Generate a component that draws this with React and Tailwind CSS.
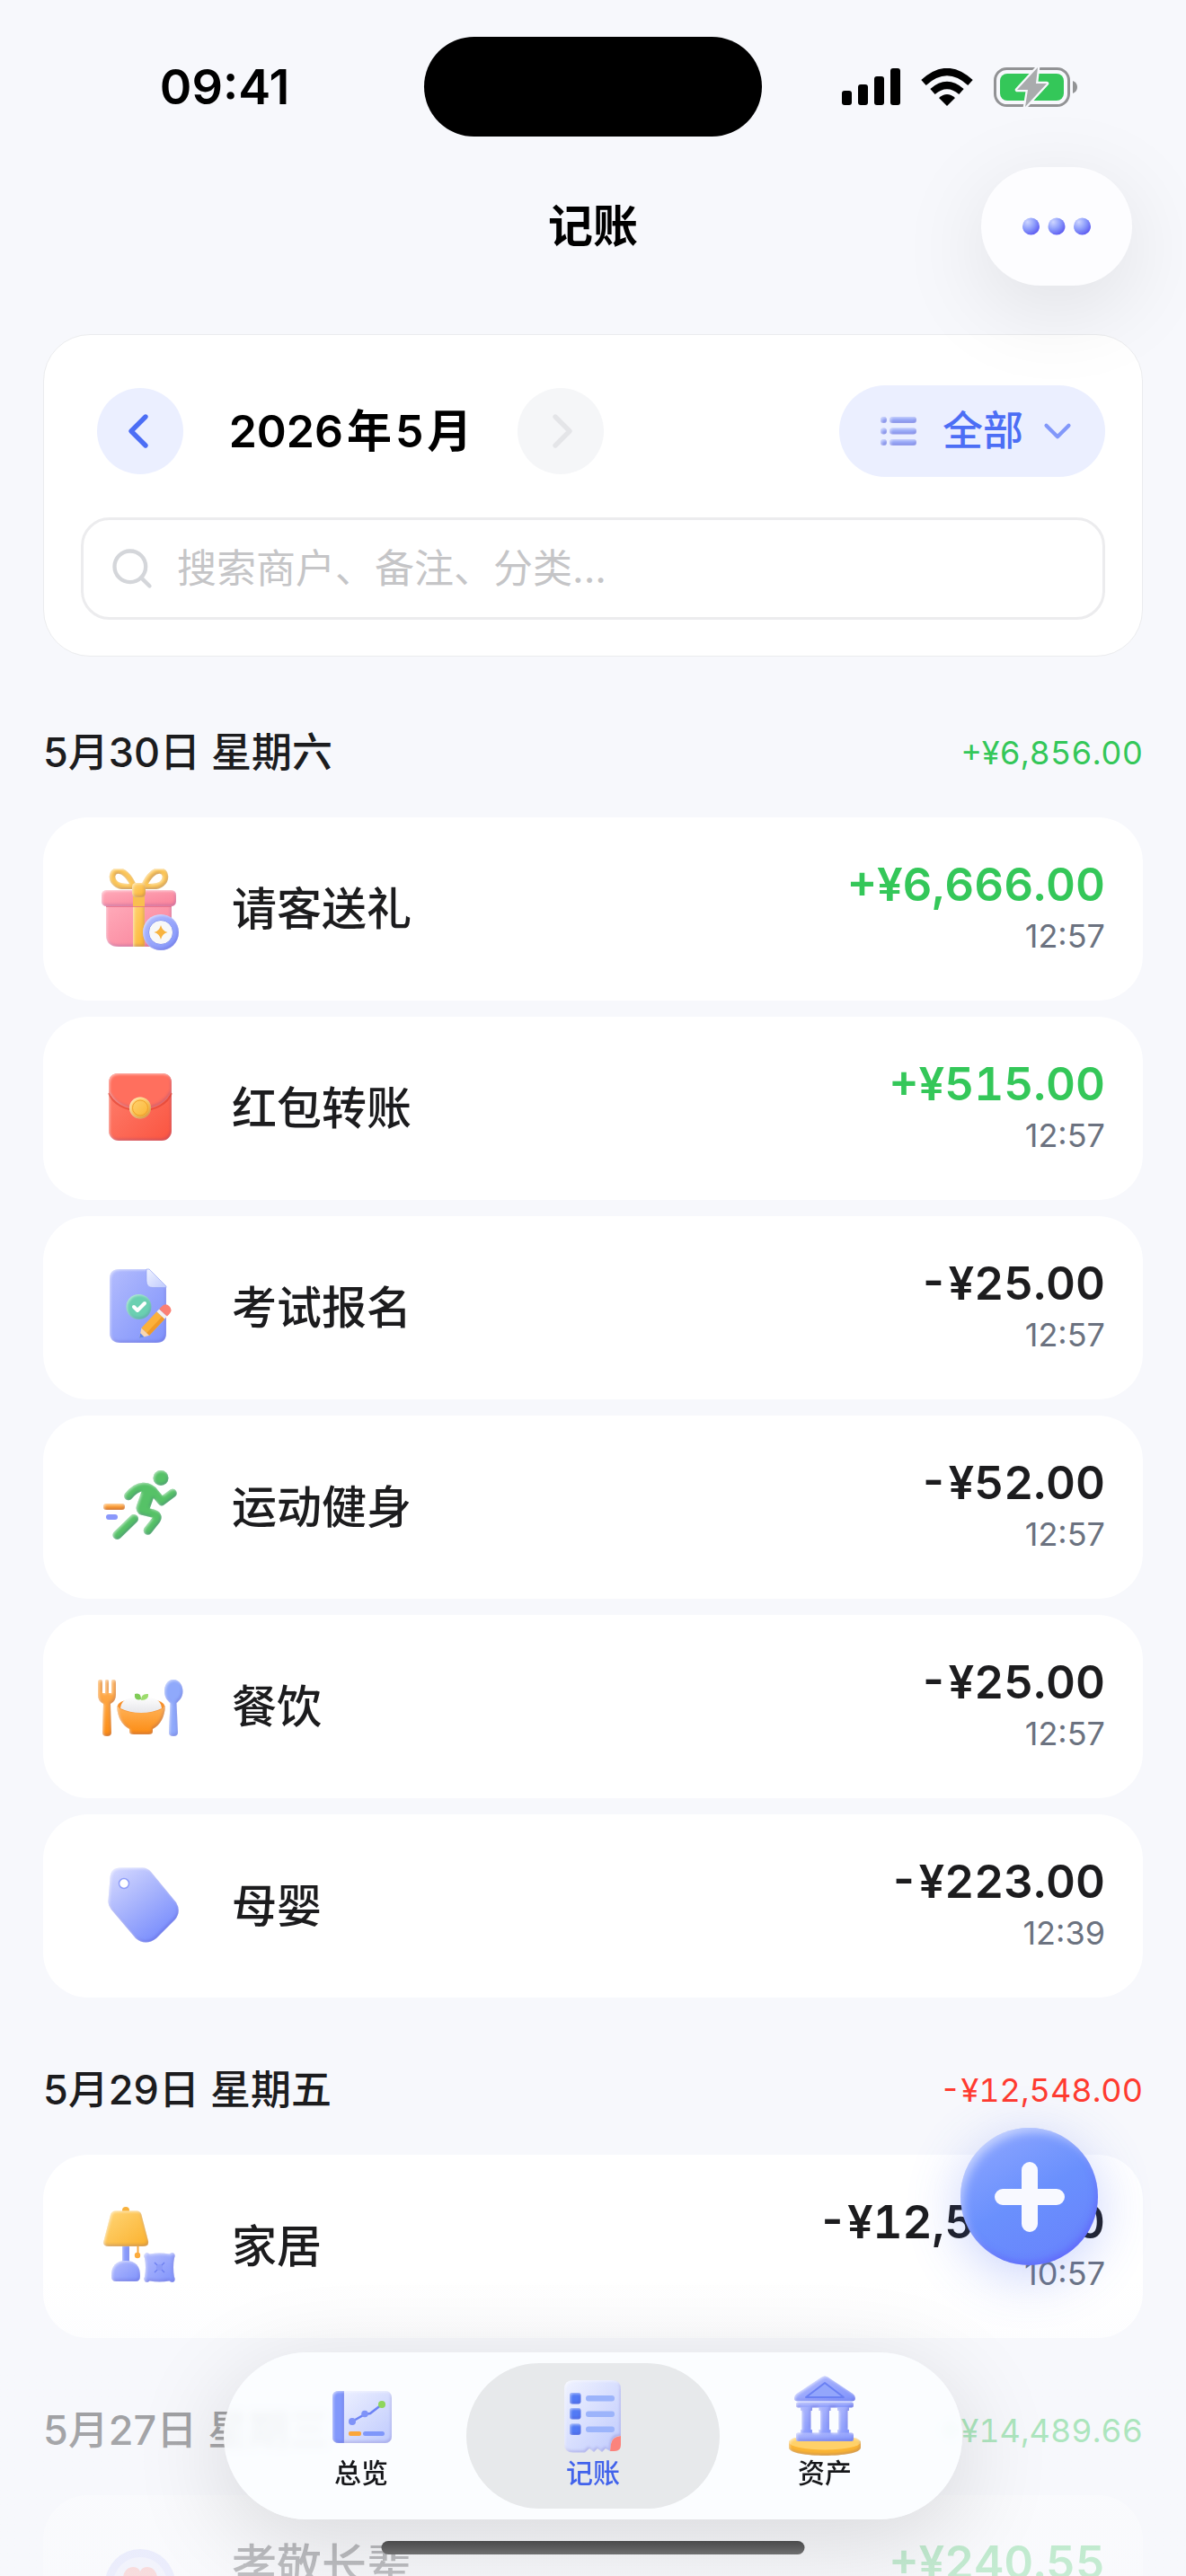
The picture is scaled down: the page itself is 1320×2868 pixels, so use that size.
import React from "react";
import { ChevronDown, ChevronLeft, ChevronRight, Search } from "lucide-react";

const days = [
  {
    date: "5月30日 星期六",
    total: "+¥6,856.00",
    records: [
      { name: "请客送礼", amount: "+¥6,666.00", time: "12:57", Icon: GiftIcon },
      { name: "红包转账", amount: "+¥515.00", time: "12:57", Icon: RedPacketIcon },
      { name: "考试报名", amount: "-¥25.00", time: "12:57", Icon: ExamIcon },
      { name: "运动健身", amount: "-¥52.00", time: "12:57", Icon: RunnerIcon },
      { name: "餐饮", amount: "-¥25.00", time: "12:57", Icon: MealIcon },
      { name: "母婴", amount: "-¥223.00", time: "12:39", Icon: TagIcon },
    ],
  },
  {
    date: "5月29日 星期五",
    total: "-¥12,548.00",
    records: [
      { name: "家居", amount: "-¥12,548.00", time: "10:57", Icon: LampIcon },
    ],
  },
  {
    date: "5月27日 星期三",
    total: "+¥14,489.66",
    records: [
      { name: "孝敬长辈", note: "", amount: "+¥240.55", time: "", Icon: HeartIcon },
    ],
  },
];

// shared gradients and the soft bevel used by all category icons
function IconDefs() {
  return (
    <svg className="absolute h-0 w-0" aria-hidden="true">
      <defs>
        <linearGradient id="pink" x1="0" y1="0" x2="1" y2="1">
          <stop offset="0" stopColor="#ffabba" />
          <stop offset="1" stopColor="#f98199" />
        </linearGradient>
        <linearGradient id="gold" x1="0" y1="0" x2="1" y2="1">
          <stop offset="0" stopColor="#ffd678" />
          <stop offset="1" stopColor="#fbb12d" />
        </linearGradient>
        <linearGradient id="red" x1="0" y1="0" x2="1" y2="1">
          <stop offset="0" stopColor="#ff8270" />
          <stop offset="1" stopColor="#fa5440" />
        </linearGradient>
        <linearGradient id="blue" x1="0" y1="0" x2="1" y2="1">
          <stop offset="0" stopColor="#b3bcfd" />
          <stop offset="1" stopColor="#7f92fb" />
        </linearGradient>
        <linearGradient id="tag" x1="0.1" y1="0" x2="0.8" y2="1">
          <stop offset="0" stopColor="#d3d7ff" />
          <stop offset="0.5" stopColor="#a3b0fc" />
          <stop offset="1" stopColor="#7388fd" />
        </linearGradient>
        <linearGradient id="pale" x1="0" y1="0" x2="1" y2="1">
          <stop offset="0" stopColor="#f0f3ff" />
          <stop offset="1" stopColor="#bfcafd" />
        </linearGradient>
        <linearGradient id="orange" x1="0" y1="0" x2="0" y2="1">
          <stop offset="0" stopColor="#ffb35a" />
          <stop offset="1" stopColor="#fc8b12" />
        </linearGradient>
        <linearGradient id="rice" x1="0" y1="0" x2="0" y2="1">
          <stop offset="0" stopColor="#ffffff" />
          <stop offset="1" stopColor="#e6e6ea" />
        </linearGradient>
        <radialGradient id="dot" cx="0.3" cy="0.25" r="0.85">
          <stop offset="0" stopColor="#ced6ff" />
          <stop offset="0.5" stopColor="#8c9cfb" />
          <stop offset="1" stopColor="#5753f0" />
        </radialGradient>
        <filter id="puff" x="-10%" y="-10%" width="120%" height="120%" colorInterpolationFilters="sRGB">
          <feGaussianBlur in="SourceAlpha" stdDeviation="1.4" result="soft" />
          <feOffset in="soft" dx="1.2" dy="1.4" result="down" />
          <feComposite in="SourceAlpha" in2="down" operator="out" result="topEdge" />
          <feFlood floodColor="#fff" floodOpacity="0.6" />
          <feComposite in2="topEdge" operator="in" result="light" />
          <feOffset in="soft" dx="-1" dy="-1.6" result="up" />
          <feComposite in="SourceAlpha" in2="up" operator="out" result="lowEdge" />
          <feFlood floodColor="#30209a" floodOpacity="0.2" />
          <feComposite in2="lowEdge" operator="in" result="dark" />
          <feMerge>
            <feMergeNode in="SourceGraphic" />
            <feMergeNode in="dark" />
            <feMergeNode in="light" />
          </feMerge>
        </filter>
      </defs>
    </svg>
  );
}

function CategoryIcon({ children }) {
  return (
    <svg viewBox="0 0 96 96" className="h-24 w-24 shrink-0" aria-hidden="true">
      {children}
    </svg>
  );
}

function GiftIcon() {
  return (
    <CategoryIcon>
      <g fill="none" stroke="#fcc656" strokeWidth="6.5" strokeLinejoin="round" filter="url(#puff)">
        <path d="M41 23 C36 11 29 5 23 5.5 C16 6 15 15 21 20 C26 24 34 23.5 41 23 Z" />
        <path d="M52 23 C57 11 64 5 70 5.5 C77 6 78 15 72 20 C67 24 59 23.5 52 23 Z" />
      </g>
      <path d="M10 43 H83 V78 Q83 90 71 90 H24 Q10 90 10 76 Z" fill="url(#pink)" filter="url(#puff)" />
      <rect x="40" y="43" width="13" height="47" fill="url(#gold)" filter="url(#puff)" />
      <rect x="5" y="27" width="83" height="18" rx="5.5" fill="url(#pink)" filter="url(#puff)" />
      <path d="M10 45.5 H83" stroke="#e8607c" strokeWidth="1" opacity="0.7" />
      <rect x="40" y="27" width="13" height="18" fill="#f9bf50" />
      <rect x="39" y="19" width="15" height="16" rx="4.5" fill="url(#gold)" filter="url(#puff)" />
      <circle cx="71" cy="74" r="20" fill="url(#blue)" filter="url(#puff)" />
      <circle cx="71" cy="74" r="13.5" fill="#f8f8f8" stroke="#8797f2" strokeWidth="1" />
      <path d="M71 66 Q72.5 72.5 78.5 74 Q72.5 75.5 71 82 Q69.5 75.5 63.5 74 Q69.5 72.5 71 66 Z" fill="#f8b33e" />
    </CategoryIcon>
  );
}

function RedPacketIcon() {
  return (
    <CategoryIcon>
      <rect x="13" y="9" width="70" height="75" rx="11" fill="url(#red)" filter="url(#puff)" />
      <path d="M13 31 C18 43 31 50.5 48 50.5 C65 50.5 78 43 83 31" fill="none" stroke="#d93a2c" strokeWidth="2" opacity="0.55" />
      <path d="M13 29 C18 41 31 49 48 49 C65 49 78 41 83 29 V20 Q83 9 72 9 H24 Q13 9 13 20 Z" fill="#ff6f5e" filter="url(#puff)" />
      <circle cx="48" cy="47.5" r="12" fill="url(#gold)" filter="url(#puff)" />
      <circle cx="48" cy="47.5" r="8.5" fill="none" stroke="#f0a02a" strokeWidth="1" />
    </CategoryIcon>
  );
}

function ExamIcon() {
  return (
    <CategoryIcon>
      <path d="M25 5 H55 L77 25 V76 Q77 87 66 87 H26 Q14 87 14 75 V16 Q14 5 25 5 Z" fill="url(#blue)" filter="url(#puff)" />
      <path d="M55 5 H58 L77 24 V25.5 H62 Q55 25.5 55 18 Z" fill="url(#pale)" stroke="#8c9af2" strokeWidth="0.6" />
      <circle cx="46.5" cy="47" r="14" fill="#6bd0b1" filter="url(#puff)" />
      <path d="M41 47 L45 51 L53 43" fill="none" stroke="#fff" strokeWidth="4" strokeLinecap="round" strokeLinejoin="round" />
      <g transform="translate(47 82) rotate(-47)">
        <path d="M0 0 L10 -6 V6 Z" fill="#f8d6b2" />
        <path d="M0 0 L5 -3 V3 Z" fill="#5f86e8" />
        <rect x="10" y="-6" width="25" height="12" fill="#fcb13c" />
        <rect x="10" y="2" width="25" height="4" fill="#f09a28" />
        <rect x="35" y="-6" width="4" height="12" fill="#f4efee" />
        <path d="M39 -6 H42 Q49 -6 49 0 Q49 6 42 6 H39 Z" fill="#fb8073" />
      </g>
    </CategoryIcon>
  );
}

function RunnerIcon() {
  return (
    <CategoryIcon>
      <rect x="7" y="44" width="24" height="7" rx="3.5" fill="url(#orange)" filter="url(#puff)" />
      <rect x="10" y="56" width="13" height="6" rx="3" fill="#8a98fb" />
      <g fill="none" stroke="#56c267" strokeLinecap="round" strokeLinejoin="round" filter="url(#puff)">
        <circle cx="71" cy="15.5" r="8.5" fill="#56c267" stroke="none" />
        <path d="M22.5 79 L41 61" strokeWidth="10" />
        <path d="M35 35.5 Q43 26 51 25.5 Q59 25 64 32 L72 41.5 L84 32.5" strokeWidth="9.5" />
        <path d="M57 32 L51 49" strokeWidth="15" />
        <path d="M50 52 L62 55 Q69 57 66 62 L56.5 74" strokeWidth="9.5" />
      </g>
    </CategoryIcon>
  );
}

function MealIcon() {
  return (
    <CategoryIcon>
      <path
        d="M1 21 Q1 18 4 18 Q6 18 6 21 V33 H9 V20 Q9 18 11 18 Q13 18 13 20 V33 H16 V21 Q16 18 18 18 Q21 18 21 21 V35 Q21 42 15 45 L16 77 Q16 81 11 81 Q6 81 6 77 L7 45 Q1 42 1 35 Z"
        fill="url(#orange)"
        filter="url(#puff)"
      />
      <path
        d="M22 47 H76 Q75 66 62 73 V76 Q62 79 57 79 H41 Q36 79 36 76 V73 Q23 66 22 47 Z"
        fill="url(#orange)"
        filter="url(#puff)"
      />
      <ellipse cx="49" cy="47" rx="26" ry="8" fill="#f7902a" />
      <path d="M26 50 Q27 39 40 38 Q49 35 58 38 Q71 39 72 50 Q62 55 49 55 Q36 55 26 50 Z" fill="url(#rice)" />
      <path d="M49 40 Q41 42 42 34 Q49 32 49 40 Z" fill="#7fcb56" />
      <path d="M49 41 Q49 33 57 34 Q58 41 49 41 Z" fill="#9ddc6d" />
      <path
        d="M85 18 C92 18 95.5 25 95.5 31 C95.5 38 91 42 88.5 44 L90 77 Q90 81 85 81 Q80 81 80 77 L81.5 44 C79 42 75 38 75 31 C75 25 78 18 85 18 Z"
        fill="#8fa9fb"
        filter="url(#puff)"
      />
    </CategoryIcon>
  );
}

function TagIcon() {
  return (
    <CategoryIcon>
      <path d="M14.5 17 Q15 5.5 26 5.5 H51 Q56 5.5 60 10 L88 44 Q94 54 87 63 L66 84 Q54 93 43 84 L15.5 51.5 Q12 47 12.5 42 Z" fill="url(#tag)" filter="url(#puff)" />
      <circle cx="30" cy="23" r="5.5" fill="#fff" stroke="#8f9df8" strokeWidth="1.5" />
    </CategoryIcon>
  );
}

function LampIcon() {
  return (
    <CategoryIcon>
      <circle cx="32" cy="8" r="4" fill="#f8b13c" />
      <path d="M45.5 46 V56" stroke="#f8a93c" strokeWidth="2" />
      <circle cx="45" cy="58" r="3.2" fill="#fbab3d" />
      <rect x="28" y="46" width="8" height="22" fill="#8a9cfb" filter="url(#puff)" />
      <path d="M16 81 Q16 64 32 64 Q48 64 48 81 Q48 87 43 87 H21 Q16 87 16 81 Z" fill="url(#blue)" filter="url(#puff)" />
      <path d="M21 8.5 H44 Q48.5 8.5 49.5 13 L57 42 Q58 48 51 48 H13 Q6 48 7.5 42 L15 13 Q16 8.5 21 8.5 Z" fill="url(#gold)" filter="url(#puff)" />
      <path d="M55 55 Q57 55 58.5 56.5 Q69.5 54.5 80.5 56.5 Q82 55 84.5 55 Q88 57 86 61 Q84 71 86 82 Q88 86 84.5 88 Q82 88 80.5 86.5 Q69.5 88.5 58.5 86.5 Q57 88 55 88 Q51 86 53 82 Q55 71 53 61 Q51 57 55 55 Z" fill="url(#blue)" filter="url(#puff)" />
      <path d="M64 66 L75 77 M75 66 L64 77" stroke="#6d7ff0" strokeWidth="1.3" />
      <circle cx="69.5" cy="71.5" r="3.6" fill="#8d9cf8" />
    </CategoryIcon>
  );
}

function HeartIcon() {
  return (
    <CategoryIcon>
      <circle cx="48" cy="45" r="39" fill="#c9cdfb" />
      <circle cx="48" cy="45" r="30" fill="#e4e5fb" />
      <path d="M48 65 C20 47 28 26 40 26 Q46 26 48 31 Q50 26 56 26 C68 26 76 47 48 65 Z" fill="#f98a84" />
    </CategoryIcon>
  );
}

function TabIcon({ children }) {
  return (
    <svg viewBox="0 0 96 90" className="h-[90px] w-24" aria-hidden="true">
      {children}
    </svg>
  );
}

function BookIcon() {
  return (
    <TabIcon>
      <rect x="16" y="17" width="66" height="58" rx="7" fill="url(#pale)" filter="url(#puff)" />
      <path d="M29 17 V75 H23 Q16 75 16 68 V24 Q16 17 23 17 Z" fill="#8298fb" filter="url(#puff)" />
      <path d="M38 51 L52 43 L58 42 L71 32" fill="none" stroke="#6d83f5" strokeWidth="2.5" />
      <circle cx="38" cy="51" r="4" fill="#7f93f8" />
      <circle cx="52" cy="42.5" r="3.8" fill="#7f93f8" />
      <circle cx="71" cy="32" r="4" fill="#8ed65c" />
      <rect x="34" y="62" width="14" height="5" rx="2" fill="#fba63a" />
      <rect x="50" y="62" width="24" height="5" rx="2.5" fill="#7f97fa" />
    </TabIcon>
  );
}

function ReceiptIcon() {
  return (
    <TabIcon>
      <path d="M26 5 H69 Q79 5 79 15 V67 Q69 67 68 77 L67 84 L62 81 L58 85 L53 81 L49 85 L44 81 L39 85.5 H26 Q16 85.5 16 76 V15 Q16 5 26 5 Z" fill="url(#pale)" filter="url(#puff)" />
      <path d="M67 84 L68 76 Q69 68 79 67 V77 Q79 84 72 84 Z" fill="#fb837c" />
      <g fill="#527af5" filter="url(#puff)">
        <rect x="22" y="19" width="12.5" height="12.5" rx="3" />
        <rect x="22" y="36" width="12.5" height="12.5" rx="3" />
        <rect x="22" y="53.5" width="12.5" height="12.5" rx="3" />
      </g>
      <g fill="#9cb4fb">
        <rect x="40" y="22" width="32" height="6.5" rx="3" />
        <rect x="40" y="39.5" width="32" height="6.5" rx="3" />
        <rect x="40" y="56.5" width="32" height="6.5" rx="3" />
      </g>
    </TabIcon>
  );
}

function BankIcon() {
  return (
    <TabIcon>
      <g filter="url(#puff)">
        <path d="M8 73 V80 C8 92 88 92 88 80 V73 Z" fill="#fbb534" />
        <ellipse cx="48" cy="74" rx="40" ry="8.5" fill="#ffd169" />
      </g>
      <g fill="url(#blue)" filter="url(#puff)">
        <path d="M44 2 Q48 -1 52 2 L79 20 Q82 22 82 25 Q82 28.5 78 28.5 H18 Q14 28.5 14 25 Q14 22 17 20 Z" />
        <rect x="16" y="29.5" width="64" height="6" rx="2.5" />
        <path d="M21 35 H34 V39 H32.5 V60 H34 V64 H21 V60 H22.5 V39 H21 Z" />
        <path d="M41.5 35 H54.5 V39 H53 V60 H54.5 V64 H41.5 V60 H43 V39 H41.5 Z" />
        <path d="M62 35 H75 V39 H73.5 V60 H75 V64 H62 V60 H63.5 V39 H62 Z" />
        <rect x="16" y="63.5" width="64" height="9.5" rx="2.5" />
      </g>
      <path d="M48 8 L69 24 H27 Z" fill="#93a6fb" stroke="#6a80f3" strokeWidth="2" strokeLinejoin="round" />
    </TabIcon>
  );
}

function StatusBar() {
  return (
    <div className="grid grid-cols-[1fr_376px_1fr] items-center pt-[41px]">
      <time className="pl-7 text-center text-[54px] leading-none font-semibold">09:41</time>
      <div className="h-[111px] rounded-full bg-black" />
      <div className="flex items-center justify-center gap-[23px] pr-8">
        <svg viewBox="0 0 65 42" className="h-[42px] w-[65px]" aria-hidden="true">
          <rect x="0" y="25" width="11" height="16" rx="3" />
          <rect x="18" y="18" width="11" height="23" rx="3" />
          <rect x="36" y="9" width="11" height="32" rx="3" />
          <rect x="54" y="0" width="11" height="41" rx="3" />
        </svg>
        <svg viewBox="0 0 58 42" className="h-[42px] w-[58px]" aria-hidden="true">
          <path d="M29 42 L20 33 Q29 25 38 33 Z" strokeLinejoin="round" />
          <path d="M13 26 Q29 12 45 26" fill="none" stroke="#000" strokeWidth="8" />
          <path d="M3 16 Q29 -8 55 16" fill="none" stroke="#000" strokeWidth="8" />
        </svg>
        <svg viewBox="0 0 93 44" className="h-11 w-[93px]" aria-hidden="true">
          <rect x="1.5" y="1.5" width="82" height="41" rx="13" fill="none" stroke="#929395" strokeWidth="3" />
          <rect x="7" y="7" width="71" height="30" rx="8" fill="#34c759" />
          <path d="M88 15 Q93 17 93 22 Q93 27 88 29 Z" fill="#929395" />
          <path d="M49 0 L26 25 H38 L35 44 L59 18 H47 Z" fill="#a9abad" stroke="#f7f8fc" strokeWidth="4.5" strokeLinejoin="round" paintOrder="stroke" />
        </svg>
      </div>
    </div>
  );
}

function FilterCard() {
  return (
    <section className="mb-1 rounded-[52px] border border-[#ebecee] bg-white px-[41px] pt-14 pb-10">
      <div className="flex items-center justify-between">
        <div className="flex items-center pl-[18px]">
          <button aria-label="上个月" className="flex h-24 w-24 items-center justify-center rounded-full bg-[#ebefff] pr-1 text-[#4c6ef5]">
            <ChevronLeft strokeWidth={2} className="h-16 w-16" />
          </button>
          <h2 className="w-[372px] text-center text-[50px] leading-none font-semibold text-black">
            2026<span className="mx-1">年</span>5<span className="ml-1">月</span>
          </h2>
          <button aria-label="下个月" disabled className="flex h-24 w-24 items-center justify-center rounded-full bg-[#f5f6f8] pl-1 text-[#e4e5e8]">
            <ChevronRight strokeWidth={2} className="h-16 w-16" />
          </button>
        </div>
        <label className="flex h-[102px] items-center rounded-full bg-[#ebefff] pr-7 pl-[46px] text-[#4c6ef5]">
          <svg viewBox="0 0 40 32" className="mr-[29px] h-8 w-10" aria-hidden="true">
            <g fill="#9aabf9" filter="url(#puff)">
              <circle cx="3.5" cy="3.5" r="3.5" />
              <circle cx="3.5" cy="16" r="3.5" />
              <circle cx="3.5" cy="28.5" r="3.5" />
              <rect x="10" y="0" width="30" height="7" rx="3.5" />
              <rect x="10" y="12.5" width="30" height="7" rx="3.5" />
              <rect x="10" y="25" width="30" height="7" rx="3.5" />
            </g>
          </svg>
          <select aria-label="账单类型" className="appearance-none bg-transparent text-[45px] leading-[60px] font-medium">
            <option>全部</option>
            <option>支出</option>
            <option>收入</option>
          </select>
          <ChevronDown strokeWidth={2} className="ml-3 h-[50px] w-[50px] text-[#8298fa]" />
        </label>
      </div>
      <label className="mt-[45px] flex h-[114px] items-center gap-6 rounded-[32px] border-[3px] border-[#ececee] pr-8 pl-7">
        <Search strokeWidth={2} className="h-[52px] w-[52px] shrink-0 text-[#d4d6da]" />
        <input
          type="search"
          aria-label="搜索"
          placeholder="搜索商户、备注、分类..."
          className="min-w-0 flex-1 bg-transparent text-[44px] leading-[60px] outline-none placeholder:text-[#c5c5c7]"
        />
      </label>
    </section>
  );
}

function RecordRow({ name, note, amount, time, Icon }) {
  return (
    <li className="flex h-[204px] items-center rounded-[50px] bg-white pr-[42px] pl-[60px]">
      <Icon />
      <span className="ml-[54px] flex flex-1 flex-col">
        <span className="text-[50px] leading-[60px] font-medium">{name}</span>
        {note !== undefined && <span className="h-12 text-[36px] leading-[48px] text-[#6b7280]">{note}</span>}
      </span>
      <span className="flex flex-col items-end">
        <span
          className={`text-[51px] leading-[60px] font-semibold tabular-nums ${
            amount.startsWith("+") ? "text-[#34c759]" : ""
          }`}
        >
          {amount}
        </span>
        <time className="h-[54px] text-[36px] leading-[54px] text-[#6b7280]">{time}</time>
      </span>
    </li>
  );
}

function TabItem({ label, active, children }) {
  return (
    <a
      href="#"
      aria-current={active ? "page" : undefined}
      className={`-mx-3 flex h-[162px] w-[282px] flex-col items-center rounded-full pt-[14px] ${
        active ? "bg-[#e7e9eb] text-[#4263eb]" : "text-[#16171a]"
      }`}
    >
      {children}
      <span className="text-[30px] leading-9 font-medium">{label}</span>
    </a>
  );
}

export default function App() {
  return (
    <div className="relative flex h-screen flex-col overflow-hidden bg-[#f7f8fc] font-['Inter','Noto_Sans_CJK_SC',sans-serif] text-[#1c1c1e]">
      <IconDefs />
      <header className="relative z-10 text-black">
        <StatusBar />
        <div className="grid grid-cols-[1fr_auto_1fr] items-center px-[60px] pt-[34px]">
          <h1 className="col-start-2 text-[50px] leading-none font-semibold">记账</h1>
          <button
            aria-label="更多"
            className="flex h-[132px] w-[168px] items-center justify-center justify-self-end rounded-full bg-[#fdfdff] shadow-[0_24px_100px_rgba(0,0,0,0.10)]"
          >
            <svg viewBox="0 0 76 20" className="h-5 w-[76px]" aria-hidden="true">
              <circle cx="9.5" cy="10" r="9.5" fill="url(#dot)" />
              <circle cx="38" cy="10" r="9.5" fill="url(#dot)" />
              <circle cx="66.5" cy="10" r="9.5" fill="url(#dot)" />
            </svg>
          </button>
        </div>
      </header>

      <main className="min-h-0 flex-1 overflow-y-auto px-12 pt-[54px] [scrollbar-width:none]">
        <FilterCard />
        {days.map((day) => (
          <section key={day.date}>
            <div className="flex items-center justify-between pt-[76px] pb-[45px]">
              <h2 className="text-[45px] leading-[54px] font-medium">{day.date}</h2>
              <span
                className={`text-[36px] leading-[54px] tabular-nums ${
                  day.total.startsWith("+") ? "text-[#34c759]" : "text-[#ff3b30]"
                }`}
              >
                {day.total}
              </span>
            </div>
            <ul className="flex flex-col gap-[18px]">
              {day.records.map((record) => (
                <RecordRow key={record.name} {...record} />
              ))}
            </ul>
          </section>
        ))}
      </main>

      <div className="pointer-events-none absolute inset-x-0 bottom-0 h-[330px] bg-linear-to-b from-[#f7f8fc]/0 via-[#f7f8fc]/60 via-45% to-[#f7f8fc]/75" />

      <button
        aria-label="记一笔"
        className="absolute right-[98px] bottom-[346px] flex h-[153px] w-[153px] items-center justify-center rounded-full bg-linear-150 from-[#92a9ff] via-[#6a90fd] to-[#6780fc] shadow-[0_12px_60px_rgba(76,110,245,0.3),inset_6px_8px_12px_-4px_rgba(255,255,255,0.55),inset_-3px_-5px_9px_-2px_rgba(90,80,250,0.55)]"
      >
        <svg viewBox="0 0 80 80" className="h-20 w-20" aria-hidden="true">
          <path d="M40 10 V70 M10 40 H70" fill="none" stroke="#f8f9ff" strokeWidth="18" strokeLinecap="round" />
        </svg>
      </button>

      <div className="pointer-events-none absolute inset-x-0 bottom-[63px] flex justify-center">
        <nav className="pointer-events-auto flex items-center rounded-full bg-[#fbfdff]/90 px-6 py-3 shadow-[0_24px_110px_rgba(0,0,0,0.14)] backdrop-blur-[5px]">
          <TabItem label="总览">
            <BookIcon />
          </TabItem>
          <TabItem label="记账" active>
            <ReceiptIcon />
          </TabItem>
          <TabItem label="资产">
            <BankIcon />
          </TabItem>
        </nav>
      </div>
      <div className="absolute bottom-6 left-1/2 h-[15px] w-[471px] -translate-x-1/2 rounded-full bg-linear-to-b from-[#4a4a4b] to-[#6f6f70]" />
    </div>
  );
}
